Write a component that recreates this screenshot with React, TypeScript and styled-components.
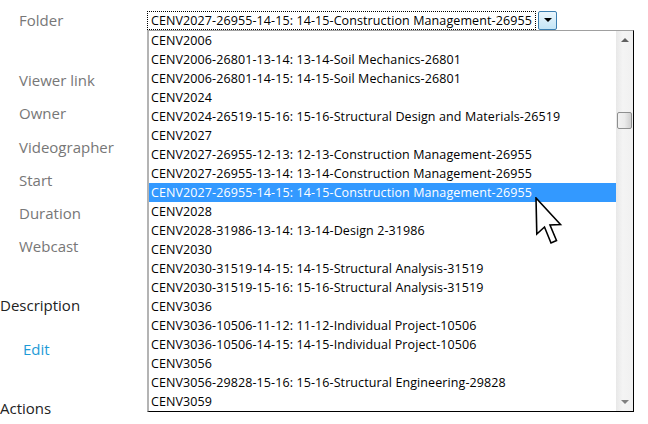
import styled, { createGlobalStyle } from "styled-components";

const GlobalStyle = createGlobalStyle`
  html, body {
    margin: 0;
    padding: 0;
    background: #ffffff;
  }
  body {
    font-family: "Open Sans", "Noto Sans", sans-serif;
  }
`;

const Page = styled.div`
  position: relative;
  width: 648px;
  height: 424px;
  overflow: hidden;
  background: #ffffff;
`;

const Fields = styled.div`
  display: flex;
  flex-direction: column;
  padding-top: 4px;
`;

const FieldRow = styled.div<{ $gap?: number }>`
  display: flex;
  align-items: center;
  height: 33.3px;
  margin-bottom: ${(p) => p.$gap ?? 0}px;
`;

const Label = styled.div`
  width: 128px;
  padding-left: 19px;
  font-size: 15px;
  color: #777777;
  line-height: 33px;
  flex-shrink: 0;
`;

const Heading = styled.div<{ $top: number }>`
  margin-top: ${(p) => p.$top}px;
  font-size: 15px;
  line-height: 34px;
  color: #222222;
`;

const EditLink = styled.a`
  display: block;
  margin-top: 10px;
  padding-left: 23px;
  font-size: 15px;
  line-height: 34px;
  color: #1e9bd7;
  text-decoration: none;
`;

const Select = styled.div`
  position: relative;
  display: flex;
  align-items: center;
  gap: 2px;
  height: 19px;
  margin-top: -1px;
`;

const SelectValue = styled.div`
  box-sizing: border-box;
  width: 389px;
  height: 19px;
  border: 1px dotted #000000;
  padding: 0 0 0 3px;
  font-size: 12.5px;
  line-height: 17px;
  color: #000000;
  white-space: nowrap;
  overflow: hidden;
  letter-spacing: 0.1px;
`;

const DropButton = styled.div`
  box-sizing: border-box;
  width: 19px;
  height: 19px;
  border: 1px solid #3c7fb1;
  border-radius: 2px;
  background: linear-gradient(#eaf6fd, #c4e5f6);
  display: flex;
  align-items: center;
  justify-content: center;
`;

const Caret = styled.div<{ $up?: boolean; $color?: string }>`
  width: 0;
  height: 0;
  border-left: 4px solid transparent;
  border-right: 4px solid transparent;
  ${(p) =>
    p.$up
      ? `border-bottom: 4px solid ${p.$color ?? "#000"};`
      : `border-top: 4px solid ${p.$color ?? "#000"};`}
`;

const ListBox = styled.div`
  position: absolute;
  left: 0;
  top: 19px;
  box-sizing: border-box;
  width: 487px;
  height: 382px;
  border-top: 1px solid #a0a0a0;
  border-left: 2px solid #b4b4b4;
  border-right: 1px solid #000000;
  border-bottom: 1px solid #000000;
  background: #ffffff;
  display: flex;
  z-index: 5;
`;

const Options = styled.ul`
  list-style: none;
  margin: 0;
  padding: 0;
  flex: 1;
  overflow: hidden;
`;

const Option = styled.li<{ $selected?: boolean }>`
  height: 19px;
  line-height: 19px;
  padding-left: 2px;
  font-size: 12.5px;
  letter-spacing: 0.1px;
  white-space: nowrap;
  color: ${(p) => (p.$selected ? "#ffffff" : "#000000")};
  background: ${(p) => (p.$selected ? "#3399ff" : "transparent")};
`;

const Scrollbar = styled.div`
  position: relative;
  width: 17px;
  background: linear-gradient(90deg, #e8e8e8, #f4f4f4 40%, #f0f0f0);
  display: flex;
  flex-direction: column;
  justify-content: space-between;
  align-items: center;
  padding: 7px 0;
  box-sizing: border-box;
`;

const Thumb = styled.div`
  position: absolute;
  left: 1px;
  top: 81px;
  box-sizing: border-box;
  width: 15px;
  height: 17px;
  border: 1px solid #8e8f8f;
  border-radius: 2px;
  background: linear-gradient(90deg, #f2f2f2, #ebebeb 50%, #cfcfcf);
`;

const Cursor = styled.svg`
  position: absolute;
  left: 386px;
  top: 166px;
  z-index: 10;
`;

const options = [
  "CENV2006",
  "CENV2006-26801-13-14: 13-14-Soil Mechanics-26801",
  "CENV2006-26801-14-15: 14-15-Soil Mechanics-26801",
  "CENV2024",
  "CENV2024-26519-15-16: 15-16-Structural Design and Materials-26519",
  "CENV2027",
  "CENV2027-26955-12-13: 12-13-Construction Management-26955",
  "CENV2027-26955-13-14: 13-14-Construction Management-26955",
  "CENV2027-26955-14-15: 14-15-Construction Management-26955",
  "CENV2028",
  "CENV2028-31986-13-14: 13-14-Design 2-31986",
  "CENV2030",
  "CENV2030-31519-14-15: 14-15-Structural Analysis-31519",
  "CENV2030-31519-15-16: 15-16-Structural Analysis-31519",
  "CENV3036",
  "CENV3036-10506-11-12: 11-12-Individual Project-10506",
  "CENV3036-10506-14-15: 14-15-Individual Project-10506",
  "CENV3056",
  "CENV3056-29828-15-16: 15-16-Structural Engineering-29828",
  "CENV3059",
];

const selected = "CENV2027-26955-14-15: 14-15-Construction Management-26955";

const fields = ["Viewer link", "Owner", "Videographer", "Start", "Duration", "Webcast"];

const App = () => {
  return (
    <Page>
      <GlobalStyle />
      <Fields>
        <FieldRow $gap={26.5}>
          <Label>Folder</Label>
          <Select>
            <SelectValue>{selected}</SelectValue>
            <DropButton>
              <Caret />
            </DropButton>
            <ListBox>
              <Options>
                {options.map((o) => (
                  <Option key={o} $selected={o === selected}>
                    {o}
                  </Option>
                ))}
              </Options>
              <Scrollbar>
                <Caret $up $color="#606060" />
                <Thumb />
                <Caret $color="#808080" />
              </Scrollbar>
              <Cursor width="28" height="50" viewBox="0 0 28 50">
                <path
                  d="M1 1 L1.8 37 L9.5 30 L16 46 L21.5 43.5 L15 28 L25.5 27.5 Z"
                  fill="#ffffff"
                  stroke="#000000"
                  strokeWidth="1.6"
                  strokeLinejoin="miter"
                />
              </Cursor>
            </ListBox>
          </Select>
        </FieldRow>
        {fields.map((f) => (
          <FieldRow key={f}>
            <Label>{f}</Label>
          </FieldRow>
        ))}
      </Fields>
      <Heading $top={24}>Description</Heading>
      <EditLink>Edit</EditLink>
      <Heading $top={25}>Actions</Heading>
    </Page>
  );
};

export default App;
